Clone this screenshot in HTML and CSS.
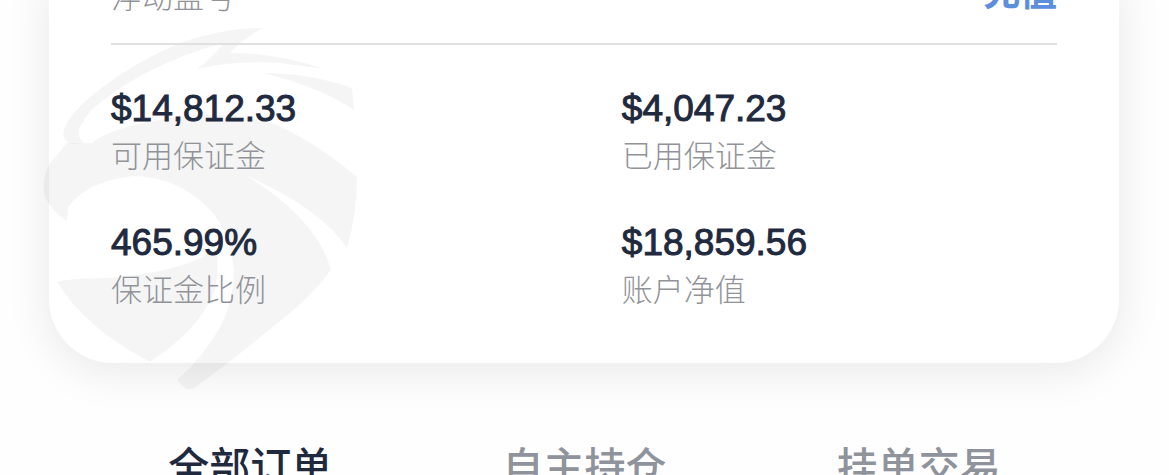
FILE: index.html
```
<!DOCTYPE html>
<html lang="zh-CN">
<head>
    <meta charset="UTF-8">
    <meta name="viewport" content="width=device-width, initial-scale=1.0">
    <title>账户</title>
    <link rel="stylesheet" href="styles.css">
</head>
<body>

    <main>
        <section class="card">
            <!-- Logo watermark -->
            <svg class="watermark" viewBox="42 10 320 380" aria-hidden="true">
                <!-- crest -->
                <path d="M263 28 Q222 28 180 43 Q130 64 90 97 Q66 118 63 133 Q64 142 72 144 L84 143 Q76 136 80 127 Q88 111 105 99 Q150 65 213 46 L222 45 Q210 60 197 69 Q237 60 280 63 L323 69 Q280 53 230 53 Q243 39 263 28 Z"></path>
                <!-- feather -->
                <path d="M263 73 Q310 73 352 88 L354 110 Q320 87 263 73 Z"></path>
                <!-- head -->
                <path d="M67 143 L92 143 Q106 130 150 122 Q220 106 277 125 Q320 145 357 177 Q357 215 347 248 Q320 208 247 176 Q318 220 331 270 Q312 295 290 313 L232 360 L193 389 H186 L177 380 Q203 357 220 327 Q233 303 234 272 Q230 228 207 207 Q177 177 133 176 Q84 182 68 208 L67 221 Q50 211 44 194 Q42 178 50 163 Z"></path>
                <!-- beak -->
                <path d="M57 282 Q70 278 110 278 Q180 272 216 250 Q220 272 214 292 Q200 329 150 362 Q85 328 57 282 Z"></path>
            </svg>

            <div class="card-head">
                <span class="label">浮动盈亏</span>
                <a class="recharge" href="#">充值</a>
            </div>

            <dl class="stats">
                <div class="stat">
                    <dd>$14,812.33</dd>
                    <dt class="label">可用保证金</dt>
                </div>
                <div class="stat">
                    <dd>$4,047.23</dd>
                    <dt class="label">已用保证金</dt>
                </div>
                <div class="stat">
                    <dd>465.99%</dd>
                    <dt class="label">保证金比例</dt>
                </div>
                <div class="stat">
                    <dd>$18,859.56</dd>
                    <dt class="label">账户净值</dt>
                </div>
            </dl>
        </section>

        <nav class="tabs">
            <button type="button" class="tab active">全部订单</button>
            <button type="button" class="tab">自主持仓</button>
            <button type="button" class="tab">挂单交易</button>
        </nav>
    </main>

</body>
</html>
```

FILE: styles.css
```
body {
    margin: 0;
    overflow: hidden;
    background-color: #fefefe;
    color: #1f2a3f;
    font-family: "Liberation Sans", "Noto Sans CJK SC", sans-serif;
}

.card {
    position: relative;
    margin: -24px 50px 0 49px;
    padding: 0 62px 52px;
    background: white;
    border-radius: 0 0 64px 64px;
    box-shadow: 0 8px 46px rgba(0, 0, 0, 0.09);
}

/* sits behind the figures and hangs over the card's lower edge */
.watermark {
    position: absolute;
    left: -7px;
    bottom: -27px;
    width: 320px;
    height: 380px;
    fill: rgba(0, 0, 0, 0.04);
}

.card-head {
    position: relative;
    display: flex;
    justify-content: space-between;
    align-items: flex-end;
    height: 67px;
    border-bottom: 2px solid #dfe1e1;
}

.card-head .label {
    padding-bottom: 25px;
}

.label {
    color: #919399;
    font-size: 31px;
    font-weight: 300;
    line-height: 40px;
}

.recharge {
    padding-bottom: 25px;
    color: #5b8fdc;
    font-size: 37px;
    font-weight: bold;
    line-height: 48px;
    text-decoration: none;
}

.stats {
    position: relative;
    display: grid;
    grid-template-columns: 54% 1fr;
    row-gap: 42px;
    margin: 0;
    padding-top: 40px;
}

.stat {
    display: flex;
    flex-direction: column;
}

.stat dd {
    margin: 0 0 4px;
    font-size: 37px;
    line-height: 48px;
    -webkit-text-stroke: 1px #1f2a3f;
}

.tabs {
    display: flex;
    margin: 79px 83px 0;
}

.tab {
    flex: 1;
    padding: 0;
    border: none;
    background: none;
    color: #8f939c;
    font-family: inherit;
    font-size: 41px;
    font-weight: 500;
    line-height: 52px;
}

.tab.active {
    color: #1f2a3f;
}
```
